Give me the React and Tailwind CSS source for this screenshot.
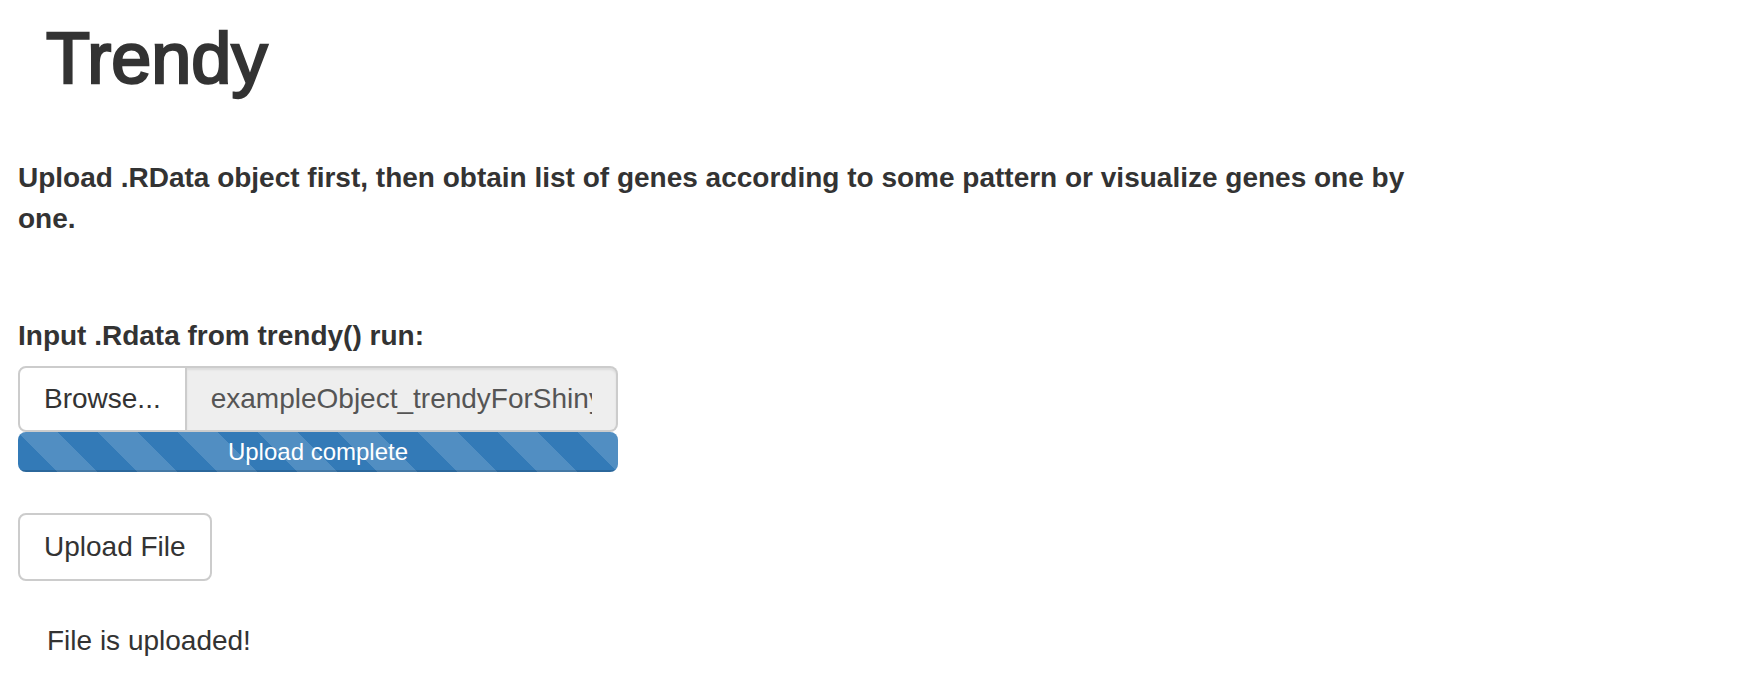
import React from "react";

const stripes = {
  backgroundImage:
    "linear-gradient(45deg, rgba(255,255,255,.15) 25%, transparent 25%, transparent 50%, rgba(255,255,255,.15) 50%, rgba(255,255,255,.15) 75%, transparent 75%, transparent)",
  backgroundSize: "80px 80px",
};

const App = () => {
  return (
    <div className="min-h-screen bg-white text-[#333] font-['Liberation_Sans',Arial,sans-serif] pl-[18px]">
      <h1 className="pl-[28px] pt-[19px] text-[72px] leading-[1.1] font-normal [-webkit-text-stroke:2.5px_#333]">
        Trendy
      </h1>

      <p className="mt-[59px] max-w-[1440px] text-[28px] leading-[41px] font-bold">
        Upload .RData object first, then obtain list of genes according to some
        pattern or visualize genes one by one.
      </p>

      <div className="mt-[77px] w-[600px]">
        <label className="block text-[28px] leading-[40px] font-bold">
          Input .Rdata from trendy() run:
        </label>
        <div className="mt-[10px] flex h-[66px]">
          <button className="shrink-0 h-full rounded-l-[8px] border-2 border-[#ccc] bg-white px-[24px] text-[28px]">
            Browse...
          </button>
          <div className="flex-1 min-w-0 h-full rounded-r-[8px] border-2 border-l-0 border-[#ccc] bg-[#eee] px-[24px] flex items-center text-[28px] text-[#555] shadow-[inset_0_2px_2px_rgba(0,0,0,0.075)]">
            <div className="overflow-hidden whitespace-nowrap">
              exampleObject_trendyForShiny.RData
            </div>
          </div>
        </div>
        <div className="h-[40px] rounded-[8px] overflow-hidden bg-[#f5f5f5]">
          <div
            className="h-full w-full bg-[#337ab7] text-white text-center text-[24px] leading-[40px] shadow-[inset_0_-2px_0_rgba(0,0,0,0.15)]"
            style={stripes}
          >
            Upload complete
          </div>
        </div>
      </div>

      <button className="mt-[41px] h-[68px] rounded-[8px] border-2 border-[#ccc] bg-white px-[24px] text-[28px] text-[#333]">
        Upload File
      </button>

      <div className="mt-[40px] pl-[29px] text-[28px] leading-[40px]">
        File is uploaded!
      </div>
    </div>
  );
};

export default App;
